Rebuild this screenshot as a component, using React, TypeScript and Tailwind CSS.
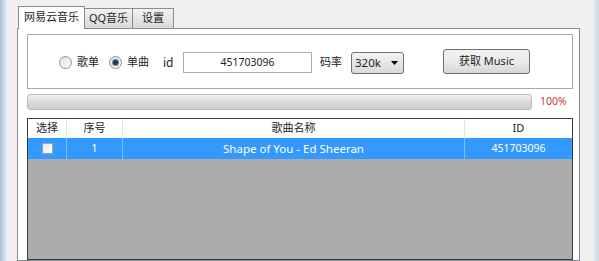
const FONT = "font-['Noto_Sans','Noto_Sans_CJK_SC',sans-serif]"

function Radio({ checked }: { checked?: boolean }) {
  return (
    <span className="w-[13px] h-[13px] rounded-full border border-[#8e8f8f] bg-gradient-to-br from-[#e2e2e2] to-[#fbfbfb] flex items-center justify-center shrink-0">
      {checked && <span className="w-[5px] h-[5px] rounded-full bg-[#1f3e54] ring-1 ring-[#6d8799]" />}
    </span>
  )
}

function Tab({ label, active, width }: { label: string; active?: boolean; width: string }) {
  if (active) {
    return (
      <div className={`${width} h-[23px] bg-white border border-[#898c95] border-b-0 flex items-center justify-center relative z-10 -mb-px pb-[2px]`}>
        {label}
      </div>
    )
  }
  return (
    <div className={`${width} h-[20px] mt-[3px] -ml-px bg-gradient-to-b from-[#f2f2f2] to-[#d9d9d9] border border-[#898c95] border-b-0 flex items-center justify-center`}>
      {label}
    </div>
  )
}

export default function App() {
  return (
    <div className={`w-[599px] h-[261px] flex bg-[#f0f0f0] overflow-hidden text-[11px] text-[#1e1e1e] ${FONT}`}>
      <div className="w-[7px] h-full bg-gradient-to-r from-[#a9bdd1] via-[#c8d8e7] to-[#e4ecf3]" />
      <div className="flex-1 flex flex-col pl-[10px] pr-[13px] pt-[5px]">
        <div className="flex items-end pl-px">
          <Tab label="网易云音乐" active width="w-[67px]" />
          <Tab label="QQ音乐" width="w-[49px]" />
          <Tab label="设置" width="w-[42px]" />
        </div>
        <div className="flex-1 bg-white border border-[#898c95] pl-[9px] pr-[6px] pt-[5px] flex flex-col">
          <div className="h-[55px] border border-[#a9a9a9] flex items-center pl-[31px] pt-[2px]">
            <Radio />
            <span className="ml-[5px] w-[22px]">歌单</span>
            <span className="ml-[10px]"><Radio checked /></span>
            <span className="ml-[5px] w-[22px]">单曲</span>
            <span className="ml-[14px] w-[20px] text-[12px]">id</span>
            <div className="w-[129px] h-[21px] border border-[#abadb3] bg-white flex items-center justify-center text-[10.5px]">451703096</div>
            <span className="ml-[8px] w-[22px]">码率</span>
            <div className="ml-[9px] w-[53px] h-[22px] border border-[#707070] rounded-[3px] bg-gradient-to-b from-[#f2f2f2] to-[#dadada] flex items-center pl-[3px] pr-[5px] justify-between text-[11.5px]">
              <span>320k</span>
              <svg width="7" height="4" viewBox="0 0 7 4"><path d="M0 0h7L3.5 4z" fill="#000" /></svg>
            </div>
            <div className="ml-[39px] w-[87px] h-[25px] -mt-[3px] border border-[#707070] rounded-[3px] bg-gradient-to-b from-[#f2f2f2] via-[#ebebeb] to-[#d6d6d6] flex items-center justify-center">获取 Music</div>
          </div>
          <div className="mt-[5px] flex items-center">
            <div className="w-[505px] h-[16px] rounded-[3px] border border-[#bcbcbc] bg-gradient-to-b from-[#f3f3f3] via-[#dadada] to-[#cfcfcf]" />
            <span className="ml-[8px] text-[#c83838] text-[10.5px]">100%</span>
          </div>
          <div className="mt-[8px] flex-1 border border-[#3c3c3c] bg-[#ababab] flex flex-col">
            <div className="h-[19px] bg-white grid grid-cols-[39px_56px_342px_1fr] items-center">
              <div className="border-r border-[#e5e5e5] h-full flex items-center justify-center">选择</div>
              <div className="border-r border-[#e5e5e5] h-full flex items-center justify-center">序号</div>
              <div className="border-r border-[#e5e5e5] h-full flex items-center justify-center">歌曲名称</div>
              <div className="h-full flex items-center justify-center">ID</div>
            </div>
            <div className="h-[21px] bg-[#3399ff] text-white grid grid-cols-[39px_56px_342px_1fr] items-center">
              <div className="border-r border-[#7cbcff] h-full flex items-center justify-center">
                <span className="w-[11px] h-[11px] border border-[#9aa5b4] bg-gradient-to-br from-[#e3e9ef] to-white" />
              </div>
              <div className="border-r border-[#7cbcff] h-full flex items-center justify-center">1</div>
              <div className="border-r border-[#7cbcff] h-full flex items-center justify-center text-[11.5px]">Shape of You - Ed Sheeran</div>
              <div className="h-full flex items-center justify-center text-[10.5px]">451703096</div>
            </div>
          </div>
        </div>
      </div>
      <div className="w-[6px] h-full bg-gradient-to-r from-[#e4ecf3] to-[#c8d8e7]" />
    </div>
  )
}
